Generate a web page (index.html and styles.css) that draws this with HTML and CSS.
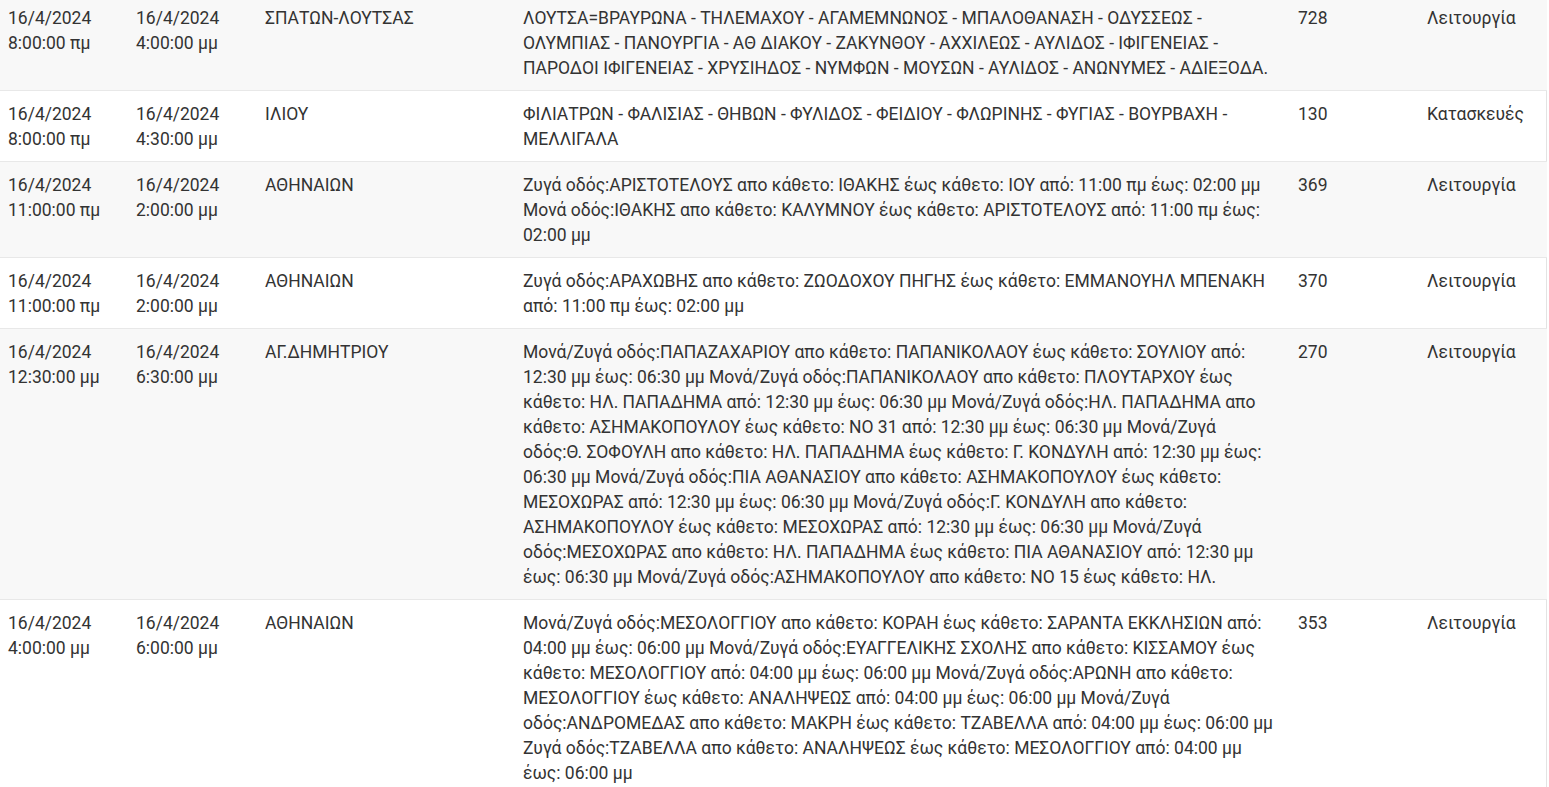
FILE: index.html
```html
<!DOCTYPE html>
<html lang="el">

<head>
    <meta charset="UTF-8">
    <meta name="viewport" content="width=device-width, initial-scale=1.0">
    <title>Διακοπές ρεύματος</title>
    <link rel="stylesheet" href="styles.css">
</head>

<body>
    <div class="outages">
        <table class="outage-table">
            <colgroup>
                <col class="c-from">
                <col class="c-to">
                <col class="c-area">
                <col class="c-streets">
                <col class="c-code">
                <col class="c-reason">
            </colgroup>
            <tbody>
                <tr>
                    <td>16/4/2024 8:00:00 πμ</td>
                    <td>16/4/2024 4:00:00 μμ</td>
                    <td>ΣΠΑΤΩΝ-ΛΟΥΤΣΑΣ</td>
                    <td class="streets">ΛΟΥΤΣΑ=ΒΡΑΥΡΩΝΑ - ΤΗΛΕΜΑΧΟΥ - ΑΓΑΜΕΜΝΩΝΟΣ - ΜΠΑΛΟΘΑΝΑΣΗ - ΟΔΥΣΣΕΩΣ - ΟΛΥΜΠΙΑΣ - ΠΑΝΟΥΡΓΙΑ - ΑΘ ΔΙΑΚΟΥ - ΖΑΚΥΝΘΟΥ - ΑΧΧΙΛΕΩΣ - ΑΥΛΙΔΟΣ - ΙΦΙΓΕΝΕΙΑΣ - ΠΑΡΟΔΟΙ ΙΦΙΓΕΝΕΙΑΣ - ΧΡΥΣΙΗΔΟΣ - ΝΥΜΦΩΝ - ΜΟΥΣΩΝ - ΑΥΛΙΔΟΣ - ΑΝΩΝΥΜΕΣ - ΑΔΙΕΞΟΔΑ.</td>
                    <td>728</td>
                    <td>Λειτουργία</td>
                </tr>
                <tr>
                    <td>16/4/2024 8:00:00 πμ</td>
                    <td>16/4/2024 4:30:00 μμ</td>
                    <td>ΙΛΙΟΥ</td>
                    <td class="streets">ΦΙΛΙΑΤΡΩΝ - ΦΑΛΙΣΙΑΣ - ΘΗΒΩΝ - ΦΥΛΙΔΟΣ - ΦΕΙΔΙΟΥ - ΦΛΩΡΙΝΗΣ - ΦΥΓΙΑΣ - ΒΟΥΡΒΑΧΗ - ΜΕΛΛΙΓΑΛΑ</td>
                    <td>130</td>
                    <td>Κατασκευές</td>
                </tr>
                <tr>
                    <td>16/4/2024 11:00:00 πμ</td>
                    <td>16/4/2024 2:00:00 μμ</td>
                    <td>ΑΘΗΝΑΙΩΝ</td>
                    <td class="streets">Ζυγά οδός:ΑΡΙΣΤΟΤΕΛΟΥΣ απο κάθετο: ΙΘΑΚΗΣ έως κάθετο: ΙΟΥ από: 11:00 πμ έως: 02:00 μμ Μονά οδός:ΙΘΑΚΗΣ απο κάθετο: ΚΑΛΥΜΝΟΥ έως κάθετο: ΑΡΙΣΤΟΤΕΛΟΥΣ από: 11:00 πμ έως: 02:00 μμ</td>
                    <td>369</td>
                    <td>Λειτουργία</td>
                </tr>
                <tr>
                    <td>16/4/2024 11:00:00 πμ</td>
                    <td>16/4/2024 2:00:00 μμ</td>
                    <td>ΑΘΗΝΑΙΩΝ</td>
                    <td class="streets">Ζυγά οδός:ΑΡΑΧΩΒΗΣ απο κάθετο: ΖΩΟΔΟΧΟΥ ΠΗΓΗΣ έως κάθετο: ΕΜΜΑΝΟΥΗΛ ΜΠΕΝΑΚΗ από: 11:00 πμ έως: 02:00 μμ</td>
                    <td>370</td>
                    <td>Λειτουργία</td>
                </tr>
                <tr>
                    <td>16/4/2024 12:30:00 μμ</td>
                    <td>16/4/2024 6:30:00 μμ</td>
                    <td>ΑΓ.ΔΗΜΗΤΡΙΟΥ</td>
                    <td class="streets">Μονά/Ζυγά οδός:ΠΑΠΑΖΑΧΑΡΙΟΥ απο κάθετο: ΠΑΠΑΝΙΚΟΛΑΟΥ έως κάθετο: ΣΟΥΛΙΟΥ από: 12:30 μμ έως: 06:30 μμ Μονά/Ζυγά οδός:ΠΑΠΑΝΙΚΟΛΑΟΥ απο κάθετο: ΠΛΟΥΤΑΡΧΟΥ έως κάθετο: ΗΛ. ΠΑΠΑΔΗΜΑ από: 12:30 μμ έως: 06:30 μμ Μονά/Ζυγά οδός:ΗΛ. ΠΑΠΑΔΗΜΑ απο κάθετο: ΑΣΗΜΑΚΟΠΟΥΛΟΥ έως κάθετο: ΝΟ 31 από: 12:30 μμ έως: 06:30 μμ Μονά/Ζυγά οδός:Θ. ΣΟΦΟΥΛΗ απο κάθετο: ΗΛ. ΠΑΠΑΔΗΜΑ έως κάθετο: Γ. ΚΟΝΔΥΛΗ από: 12:30 μμ έως: 06:30 μμ Μονά/Ζυγά οδός:ΠΙΑ ΑΘΑΝΑΣΙΟΥ απο κάθετο: ΑΣΗΜΑΚΟΠΟΥΛΟΥ έως κάθετο: ΜΕΣΟΧΩΡΑΣ από: 12:30 μμ έως: 06:30 μμ Μονά/Ζυγά οδός:Γ. ΚΟΝΔΥΛΗ απο κάθετο: ΑΣΗΜΑΚΟΠΟΥΛΟΥ έως κάθετο: ΜΕΣΟΧΩΡΑΣ από: 12:30 μμ έως: 06:30 μμ Μονά/Ζυγά οδός:ΜΕΣΟΧΩΡΑΣ απο κάθετο: ΗΛ. ΠΑΠΑΔΗΜΑ έως κάθετο: ΠΙΑ ΑΘΑΝΑΣΙΟΥ από: 12:30 μμ έως: 06:30 μμ Μονά/Ζυγά οδός:ΑΣΗΜΑΚΟΠΟΥΛΟΥ απο κάθετο: ΝΟ 15 έως κάθετο: ΗΛ.</td>
                    <td>270</td>
                    <td>Λειτουργία</td>
                </tr>
                <tr>
                    <td>16/4/2024 4:00:00 μμ</td>
                    <td>16/4/2024 6:00:00 μμ</td>
                    <td>ΑΘΗΝΑΙΩΝ</td>
                    <td class="streets">Μονά/Ζυγά οδός:ΜΕΣΟΛΟΓΓΙΟΥ απο κάθετο: ΚΟΡΑΗ έως κάθετο: ΣΑΡΑΝΤΑ ΕΚΚΛΗΣΙΩΝ από: 04:00 μμ έως: 06:00 μμ Μονά/Ζυγά οδός:ΕΥΑΓΓΕΛΙΚΗΣ ΣΧΟΛΗΣ απο κάθετο: ΚΙΣΣΑΜΟΥ έως κάθετο: ΜΕΣΟΛΟΓΓΙΟΥ από: 04:00 μμ έως: 06:00 μμ Μονά/Ζυγά οδός:ΑΡΩΝΗ απο κάθετο: ΜΕΣΟΛΟΓΓΙΟΥ έως κάθετο: ΑΝΑΛΗΨΕΩΣ από: 04:00 μμ έως: 06:00 μμ Μονά/Ζυγά οδός:ΑΝΔΡΟΜΕΔΑΣ απο κάθετο: ΜΑΚΡΗ έως κάθετο: ΤΖΑΒΕΛΛΑ από: 04:00 μμ έως: 06:00 μμ Ζυγά οδός:ΤΖΑΒΕΛΛΑ απο κάθετο: ΑΝΑΛΗΨΕΩΣ έως κάθετο: ΜΕΣΟΛΟΓΓΙΟΥ από: 04:00 μμ έως: 06:00 μμ</td>
                    <td>353</td>
                    <td>Λειτουργία</td>
                </tr>
            </tbody>
        </table>
    </div>
</body>

</html>
```

FILE: styles.css
```css
* {
    margin: 0;
    padding: 0;
    box-sizing: border-box;
}

body {
    font-family: Roboto, "Noto Sans", "Liberation Sans", sans-serif;
    font-size: 17.5px;
    line-height: 25px;
    color: #333;
    background-color: #fff;
    overflow: hidden;
}

/* the page is scrolled a little down */
.outages {
    width: 1547px;
    margin-top: -6px;
    border-right: 1px solid #e3e3e3;
}

.outage-table {
    width: 100%;
    border-collapse: collapse;
    table-layout: fixed;
}

.c-from {
    width: 128px;
}

.c-to {
    width: 129px;
}

.c-area {
    width: 258px;
}

.c-streets {
    width: 775px;
}

.c-code {
    width: 129px;
}

.c-reason {
    width: 128px;
}

.outage-table td {
    vertical-align: top;
    padding: 11px 8px 9px;
    border-top: 1px solid #e8e8e8;
}

.outage-table td.streets {
    padding-right: 15px;
}

.outage-table tr:nth-child(odd) {
    background-color: #f8f8f8;
}
```
